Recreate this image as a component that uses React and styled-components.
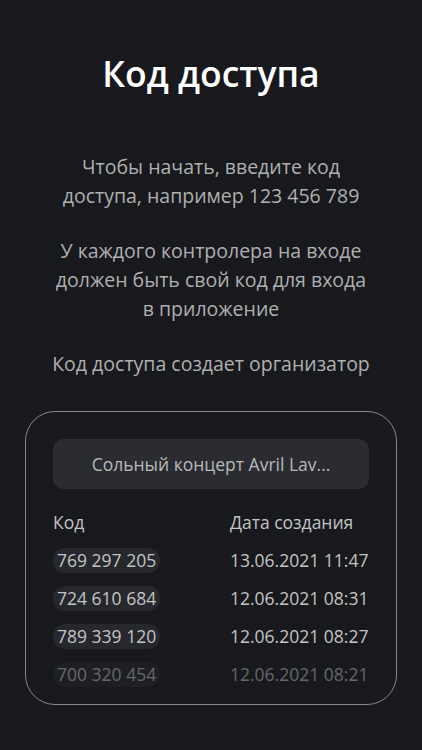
import styled, { createGlobalStyle } from "styled-components";

const GlobalStyle = createGlobalStyle`
  html, body {
    margin: 0;
    padding: 0;
    background: #17191d;
  }
  body {
    font-family: "Open Sans", "Noto Sans", sans-serif;
    -webkit-font-smoothing: antialiased;
  }
`;

const Screen = styled.div`
  width: 422px;
  min-height: 750px;
  box-sizing: border-box;
  padding-top: 48px;
  display: flex;
  flex-direction: column;
  align-items: center;
`;

const Title = styled.h1`
  margin: 0;
  font-size: 35.5px;
  font-weight: 600;
  line-height: 50px;
  color: #ffffff;
`;

const Text = styled.div`
  margin-top: 54px;
  display: flex;
  flex-direction: column;
  gap: 26px;
  text-align: center;
  color: #b0b0b0;
  font-size: 19.5px;
  line-height: 29px;
`;

const Paragraph = styled.p`
  margin: 0;
`;

const Card = styled.div`
  margin-top: 33px;
  width: 372px;
  box-sizing: border-box;
  border: 1.5px solid #85878b;
  border-radius: 30px;
  padding: 27px 27px 16px;
`;

const EventButton = styled.button`
  width: 100%;
  height: 50px;
  border: none;
  border-radius: 10px;
  background: #2a2c31;
  color: #b9b9b9;
  font-family: inherit;
  font-size: 17.5px;
  cursor: pointer;
`;

const Table = styled.div`
  margin-top: 20px;
  display: grid;
  grid-template-columns: 177px 1fr;
  row-gap: 11px;
  color: #c4c4c4;
  font-size: 17.5px;
  line-height: 27px;
`;

const Cell = styled.div`
  opacity: ${(p) => (p.$faded ? 0.45 : 1)};
  display: flex;
  align-items: center;
`;

const Pill = styled.span`
  background: #26282d;
  border-radius: 12px;
  padding: 0 4px;
  line-height: 25px;
`;

const codes = [
  { code: "769 297 205", date: "13.06.2021 11:47" },
  { code: "724 610 684", date: "12.06.2021 08:31" },
  { code: "789 339 120", date: "12.06.2021 08:27" },
  { code: "700 320 454", date: "12.06.2021 08:21", faded: true },
];

export default function App() {
  return (
    <>
      <GlobalStyle />
      <Screen>
        <Title>Код доступа</Title>
        <Text>
          <Paragraph>
            Чтобы начать, введите код
            <br />
            доступа, например 123 456 789
          </Paragraph>
          <Paragraph>
            У каждого контролера на входе
            <br />
            должен быть свой код для входа
            <br />в приложение
          </Paragraph>
          <Paragraph>Код доступа создает организатор</Paragraph>
        </Text>
        <Card>
          <EventButton>Сольный концерт Avril Lav...</EventButton>
          <Table>
            <Cell>Код</Cell>
            <Cell>Дата создания</Cell>
            {codes.map((c) => [
              <Cell key={c.code} $faded={c.faded}>
                <Pill>{c.code}</Pill>
              </Cell>,
              <Cell key={c.date} $faded={c.faded}>
                {c.date}
              </Cell>,
            ])}
          </Table>
        </Card>
      </Screen>
    </>
  );
}
